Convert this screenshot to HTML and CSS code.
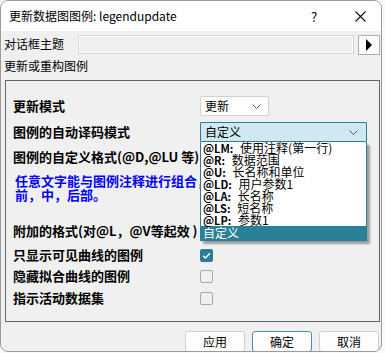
FILE: index.html
```html
<!DOCTYPE html>
<html lang="zh-CN">
<head>
<meta charset="utf-8">
<title>更新数据图图例</title>
<link rel="stylesheet" href="styles.css">
</head>
<body>
<div class="window">
  <div class="titlebar">
    <span class="title">更新数据图图例: legendupdate</span>
    <span class="help">?</span>
    <span class="close"><svg width="11" height="11" viewBox="0 0 11 11"><path d="M0.5 0.5 L10.5 10.5 M10.5 0.5 L0.5 10.5" stroke="#111" stroke-width="1.1" fill="none"/></svg></span>
  </div>
  <div class="content">
    <div class="theme-row">
      <span class="theme-label">对话框主题</span>
      <div class="theme-input"></div>
      <div class="arrow-btn"><svg width="8" height="12" viewBox="0 0 8 12"><path d="M1 0 L7 6 L1 12 Z" fill="#000"/></svg></div>
    </div>
    <div class="section-title">更新或重构图例</div>
    <div class="group">
      <div class="row r1">
        <span class="label">更新模式</span>
        <div class="combo small"><span>更新</span><svg class="chev" width="9" height="5" viewBox="0 0 9 5"><path d="M0.5 0.5 L4.5 4.5 L8.5 0.5" stroke="#555" fill="none"/></svg></div>
      </div>
      <div class="row r2">
        <span class="label">图例的自动译码模式</span>
        <div class="combo-wrap">
          <div class="combo open"><span>自定义</span><svg class="chev" width="9" height="5" viewBox="0 0 9 5"><path d="M0.5 0.5 L4.5 4.5 L8.5 0.5" stroke="#555" fill="none"/></svg></div>
          <ul class="dropdown">
            <li><b>@LM:</b> 使用注释(第一行)</li>
            <li><b>@R:</b> 数据范围</li>
            <li><b>@U:</b> 长名称和单位</li>
            <li><b>@LD:</b> 用户参数1</li>
            <li><b>@LA:</b> 长名称</li>
            <li><b>@LS:</b> 短名称</li>
            <li><b>@LP:</b> 参数1</li>
            <li class="selected">自定义</li>
          </ul>
        </div>
      </div>
      <div class="row r3"><span class="label">图例的自定义格式(@D,@LU 等)</span></div>
      <div class="hint">任意文字能与图例注释进行组合，加在注释<br>前，中，后部。</div>
      <div class="row r4"><span class="label">附加的格式(对@L，@V等起效 )</span></div>
      <div class="row r5">
        <span class="label">只显示可见曲线的图例</span>
        <span class="check on"><svg width="13" height="13" viewBox="0 0 13 13"><path d="M3 6.8 L5.4 9 L10 4.2" stroke="#fff" stroke-width="1.4" fill="none"/></svg></span>
      </div>
      <div class="row r6"><span class="label">隐藏拟合曲线的图例</span><span class="check"></span></div>
      <div class="row r7"><span class="label">指示活动数据集</span><span class="check"></span></div>
    </div>
    <div class="buttons">
      <div class="btn">应用</div>
      <div class="btn default">确定</div>
      <div class="btn">取消</div>
    </div>
  </div>
</div>
</body>
</html>
```
FILE: styles.css
```css
* { box-sizing: border-box; }
html, body { margin: 0; padding: 0; }
body {
  background: #fafafa;
  width: 385px;
  height: 353px;
  overflow: hidden;
  font-family: "Noto Sans CJK SC", "Noto Sans", sans-serif;
  color: #000;
}
.window {
  width: 382px;
  height: 352px;
  border: 1px solid #9a9a9a;
  border-radius: 8px;
  background: #f0f0f0;
  overflow: hidden;
  display: flex;
  flex-direction: column;
}
.titlebar {
  height: 30px;
  background: #fff;
  display: flex;
  align-items: center;
  padding-left: 8px;
  font-size: 12px;
  flex: none;
}
.title { flex: 1; line-height: 14px; }
.help { width: 14px; text-align: center; font-size: 13px; margin-right: 34px; }
.close { width: 11px; height: 11px; margin-right: 15px; display: flex; }
.content {
  flex: 1;
  display: flex;
  flex-direction: column;
  padding: 4px 0 0 3px;
}
.theme-row {
  display: flex;
  align-items: center;
  height: 20px;
  font-size: 12px;
}
.theme-label { width: 74px; line-height: 14px; margin-top: -3px; }
.theme-input {
  width: 276px;
  height: 19px;
  align-self: flex-start;
  background: #efefef;
  border: 1px solid #d6d6d6;
  box-shadow: inset 0 0 0 1px #fafafa;
}
.arrow-btn {
  margin-left: 4px;
  width: 22px;
  height: 20px;
  background: #fdfdfd;
  border: 1px solid #adadad;
  display: flex;
  align-items: center;
  justify-content: center;
}
.section-title {
  font-size: 12px;
  line-height: 14px;
  margin-top: 4px;
}
.group {
  margin: 7px 0 0 1px;
  width: 375px;
  border: 1px solid #666;
  padding: 0 0 13px 7px;
  font-size: 13px;
}
.row {
  display: flex;
  align-items: center;
  height: 20px;
}
.label {
  width: 187px;
  flex: none;
  font-weight: bold;
  line-height: 14px;
  white-space: nowrap;
}
.r1 { margin-top: 15px; }
.r2 { margin-top: 6px; position: relative; z-index: 2; }
.r3 { margin-top: 5px; }
.r4 { margin-top: 19px; }
.r5 { margin-top: 4px; }
.r6 { margin-top: 1px; }
.r7 { margin-top: 2px; }
.hint {
  margin-top: 7px;
  padding-left: 2px;
  color: #0000ff;
  font-weight: bold;
  line-height: 14px;
  white-space: nowrap;
}
.combo {
  height: 20px;
  display: flex;
  align-items: center;
  justify-content: space-between;
  padding: 0 7px 0 4px;
  font-size: 12px;
  border-radius: 2px;
}
.combo span { line-height: 14px; }
.combo.small {
  width: 69px;
  background: #fff;
  border: 1px solid #d2d2d2;
}
.combo-wrap { position: relative; }
.combo.open {
  width: 167px;
  background: #d0e9f1;
  border: 1px solid #2b7e96;
  border-radius: 1px;
  padding-right: 8px;
}
.dropdown {
  position: absolute;
  top: 20px;
  left: 0;
  width: 167px;
  margin: 0;
  padding: 0;
  list-style: none;
  background: #fff;
  border: 1px solid #2b7e96;
  border-top: none;
  box-shadow: 3px 3px 2px rgba(0, 0, 0, 0.35);
  font-size: 12px;
}
.dropdown li {
  height: 12px;
  line-height: 12px;
  padding-left: 2px;
  white-space: nowrap;
}
.dropdown li b { font-weight: bold; font-size: 11px; margin-right: 4px; }
.dropdown li.selected {
  height: 14px;
  line-height: 14px;
  background: #2a8097;
  color: #fff;
}
.check {
  width: 13px;
  height: 13px;
  border: 1px solid #a8a8a8;
  border-radius: 2px;
  background: #f0f0f0;
  display: flex;
}
.check.on {
  background: #2a7d95;
  border-color: #2a7d95;
}
.check.on svg { margin: -1px; }
.buttons {
  display: flex;
  justify-content: flex-end;
  gap: 7px;
  margin-top: 9px;
  padding-right: 2px;
}
.btn {
  width: 60px;
  height: 21px;
  background: #fdfdfd;
  border: 1px solid #cfcfcf;
  border-radius: 3px;
  font-size: 12px;
  display: flex;
  align-items: center;
  justify-content: center;
  line-height: 14px;
}
.btn.default { border-color: #4b8ea6; }
```
